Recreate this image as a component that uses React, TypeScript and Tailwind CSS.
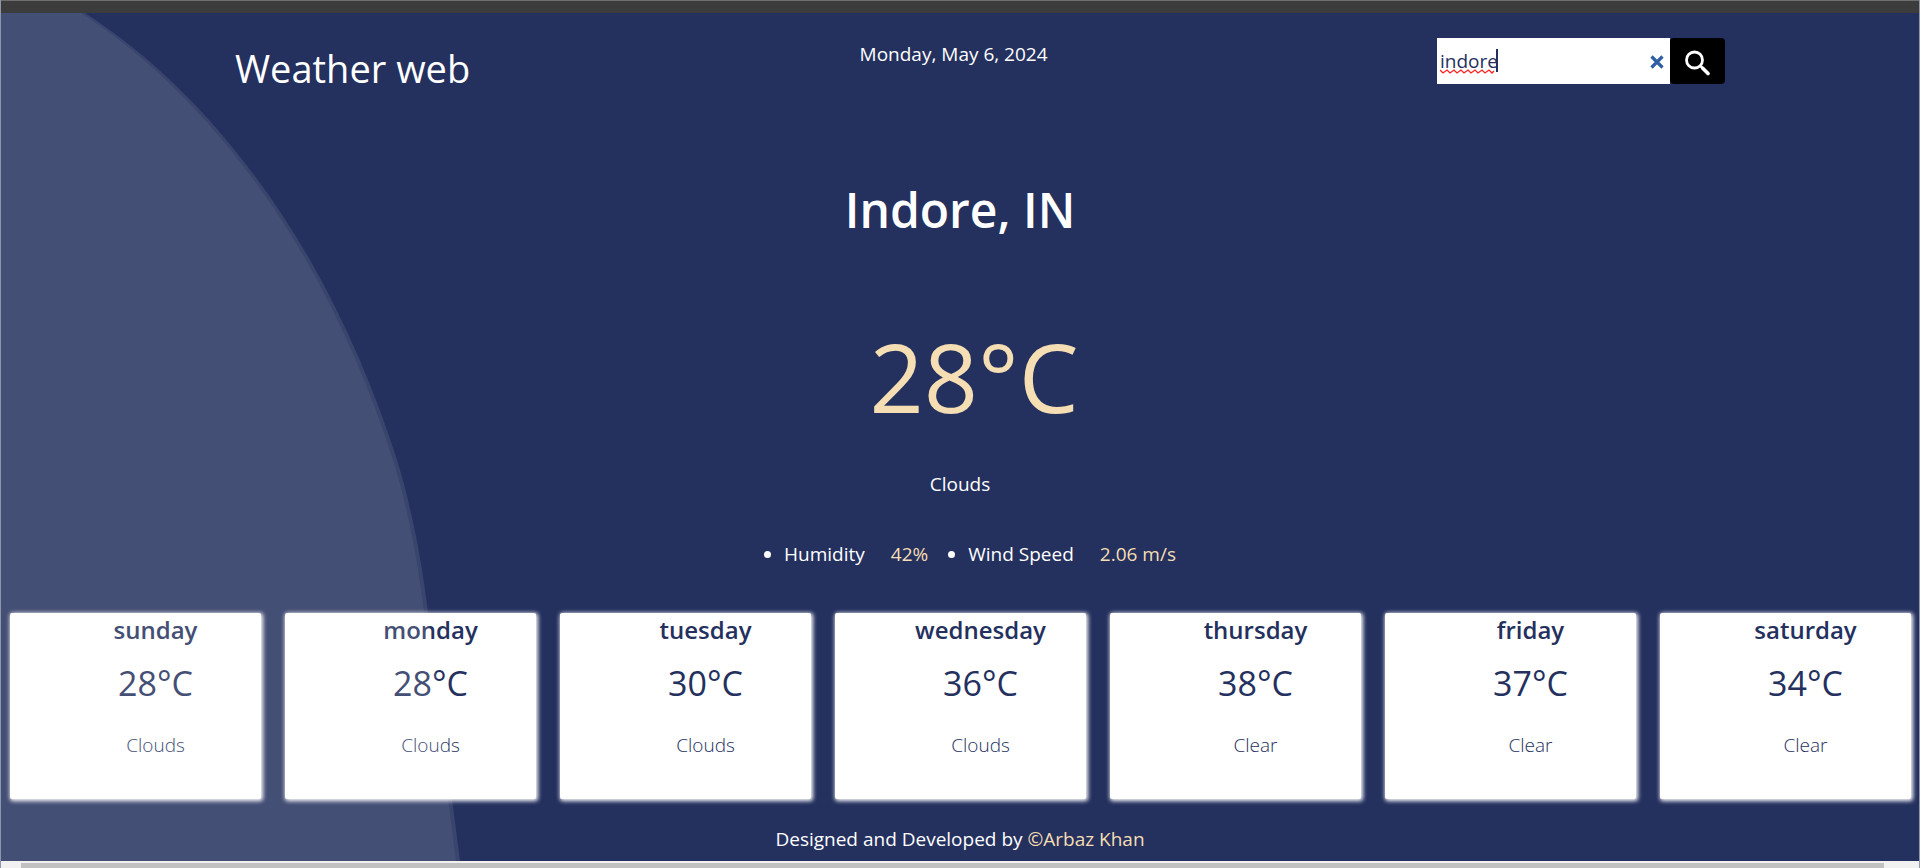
import React from "react";

type Day = { name: string; temp: number; sky: string };

const days: Day[] = [
  { name: "sunday", temp: 28, sky: "Clouds" },
  { name: "monday", temp: 28, sky: "Clouds" },
  { name: "tuesday", temp: 30, sky: "Clouds" },
  { name: "wednesday", temp: 36, sky: "Clouds" },
  { name: "thursday", temp: 38, sky: "Clear" },
  { name: "friday", temp: 37, sky: "Clear" },
  { name: "saturday", temp: 34, sky: "Clear" },
];

function Header() {
  return (
    <header className="flex items-start justify-between pt-[25px] pr-[194px] pl-[234px]">
      <h1 className="pt-0.5 text-[38px] leading-[56px]">Weather web</h1>
      <p className="pt-0.5 text-[19px] leading-7">Monday, May 6, 2024</p>
      <form className="flex h-[46px]" onSubmit={(e) => e.preventDefault()}>
        <div className="relative flex">
          <input
            type="text"
            aria-label="City"
            defaultValue="indore"
            spellCheck={false}
            className="w-[233px] bg-white pr-8 pl-[3px] text-[19px] text-[#24305e] outline-none"
          />
          <svg className="absolute top-[31px] left-[3px] h-[5px] w-[57px]" viewBox="0 0 57 5" fill="none" stroke="#ff2020" strokeWidth="1.3" aria-hidden="true">
            <path d="M0 1l3 3 4-3 3 3 4-3 3 3 4-3 3 3 4-3 3 3 4-3 3 3 4-3 3 3 4-3 3 3 2-2" />
          </svg>
          <span className="absolute top-[11px] left-[59px] h-[23px] w-[2px] bg-[#24305e]" />
          <button type="button" aria-label="Clear" className="absolute top-[17px] right-[6px]">
            <svg className="size-[14px]" viewBox="0 0 14 14" stroke="#2f5ea5" strokeWidth="3.2" aria-hidden="true">
              <path d="M1.5 1.5l11 11M12.5 1.5l-11 11" />
            </svg>
          </button>
        </div>
        <button type="submit" aria-label="Search" className="flex w-[55px] items-center justify-center rounded bg-black pt-1">
          <svg className="size-[26px]" viewBox="0 0 26 26" fill="none" stroke="#fff" aria-hidden="true">
            <circle cx="10.5" cy="10" r="8" strokeWidth="2.8" />
            <path d="M16 15.500l3 3" strokeWidth="2.6" />
            <path d="M19 18.500l5 5" strokeWidth="3.6" strokeLinecap="round" />
          </svg>
        </button>
      </form>
    </header>
  );
}

function DayCard({ day }: { day: Day }) {
  return (
    <li className="h-[186px] rounded-xs bg-white pl-10 text-center text-[#24305e] shadow-[1px_1px_4px_1px_#fff]">
      <h3 className="text-2xl leading-[34px] font-semibold">{day.name}</h3>
      <p className="pt-3 text-[34px] leading-[48px]">{day.temp}°C</p>
      <p className="pt-6 text-[19px] leading-7 font-light">{day.sky}</p>
    </li>
  );
}

const hill =
  "M0 0H84C177 60 253 150 309 247C345 310 374 378 396 447C411 495 421 550 427 599L459 848V860H0z";

export default function App() {
  return (
    <div className="relative flex min-h-screen flex-col overflow-hidden border-x border-[#8f95aa] bg-[#24305e] font-['Open_Sans','Noto_Sans',sans-serif] text-white">
      <div className="h-[13px] border-t border-[#6e6e6e] bg-[#3c3c3c]" />
      <Header />
      <main className="flex flex-col items-center">
        <h2 className="pt-[78px] text-5xl leading-[72px] font-semibold">Indore, IN</h2>
        <p className="pt-[62px] pl-7 text-[95px] leading-[136px] text-[#f5deb3]">28°C</p>
        <p className="pt-[26px] text-[19px] leading-7">Clouds</p>
        <ul className="flex list-disc gap-10 pt-[42px] pl-10 text-[19px] leading-7">
          <li>Humidity<span className="pl-[26px] text-[#f5deb3]">42%</span></li>
          <li>Wind Speed<span className="pl-[26px] text-[#f5deb3]">2.06 m/s</span></li>
        </ul>
        <ul className="grid w-full grid-cols-7 gap-6 pt-[45px] pr-2 pl-[9px]">
          {days.map((d) => <DayCard key={d.name} day={d} />)}
        </ul>
      </main>
      <footer className="pt-[26px] text-center text-[19px] leading-7">
        Designed and Developed by <a href="#" className="text-[#f5deb3]">©Arbaz Khan</a>
      </footer>
      <svg className="pointer-events-none absolute top-[13px] left-0 h-[848px] w-[460px]" viewBox="0 0 460 848" fill="#fff" aria-hidden="true">
        <path d={hill} fillOpacity=".1" />
        <path d={hill} fillOpacity=".055" transform="translate(-4 0)" />
      </svg>
      <div className="mt-auto h-[7px] bg-[#f1f1f1] pt-[2px] pr-[35px] pl-5"><div className="h-full bg-[#c1c1c1]" /></div>
    </div>
  );
}
